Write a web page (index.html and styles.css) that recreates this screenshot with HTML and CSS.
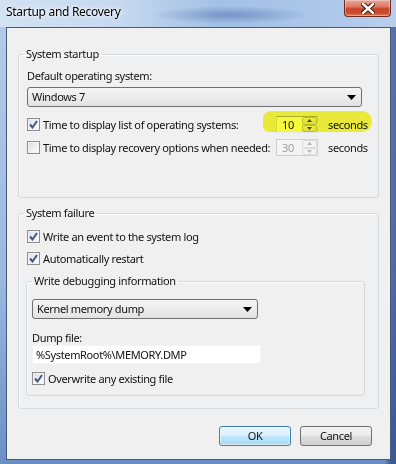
FILE: index.html
```html
<!DOCTYPE html>
<html lang="en">
<head>
    <meta charset="UTF-8">
    <title>Startup and Recovery</title>
    <link rel="stylesheet" href="styles.css">
</head>
<body>
    <div class="window">
        <div class="titlebar">
            <span class="title">Startup and Recovery</span>
            <div class="close-btn">
                <svg width="14" height="11" viewBox="0 0 14 11">
                    <path d="M2 1 L12 10 M12 1 L2 10" stroke="#3a1a14" stroke-width="4.4" stroke-linecap="square"/>
                    <path d="M2 1 L12 10 M12 1 L2 10" stroke="#ffffff" stroke-width="2.4" stroke-linecap="square"/>
                </svg>
            </div>
        </div>

        <div class="client">
            <fieldset class="group group-startup">
                <legend>System startup</legend>
                <div class="field-label">Default operating system:</div>
                <div class="select select-os">
                    <span>Windows 7</span>
                    <svg class="arrow" width="9" height="5" viewBox="0 0 9 5"><path d="M0 0 H9 L4.5 5 Z" fill="#000"/></svg>
                </div>

                <div class="row row-time">
                    <span class="highlight"></span>
                    <label class="check">
                        <span class="box checked">
                            <svg width="9" height="9" viewBox="0 0 9 9"><path d="M1 4.5 L3.5 7.5 L8 1" fill="none" stroke="#44578a" stroke-width="2"/></svg>
                        </span>
                        Time to display list of operating systems:
                    </label>
                    <div class="spin">
                        <span class="spin-value">10</span>
                        <div class="spin-btns">
                            <span class="spin-btn"><svg width="5" height="3" viewBox="0 0 5 3"><path d="M0 3 L2.5 0 L5 3 Z" fill="#4d4d4d"/></svg></span>
                            <span class="spin-btn"><svg width="5" height="3" viewBox="0 0 5 3"><path d="M0 0 L2.5 3 L5 0 Z" fill="#4d4d4d"/></svg></span>
                        </div>
                    </div>
                    <span class="unit">seconds</span>
                </div>

                <div class="row row-recovery">
                    <label class="check">
                        <span class="box"></span>
                        Time to display recovery options when needed:
                    </label>
                    <div class="spin disabled">
                        <span class="spin-value">30</span>
                        <div class="spin-btns">
                            <span class="spin-btn"><svg width="5" height="3" viewBox="0 0 5 3"><path d="M0 3 L2.5 0 L5 3 Z" fill="#b5b5b5"/></svg></span>
                            <span class="spin-btn"><svg width="5" height="3" viewBox="0 0 5 3"><path d="M0 0 L2.5 3 L5 0 Z" fill="#b5b5b5"/></svg></span>
                        </div>
                    </div>
                    <span class="unit">seconds</span>
                </div>
            </fieldset>

            <fieldset class="group group-failure">
                <legend>System failure</legend>
                <label class="check row-log">
                    <span class="box checked">
                        <svg width="9" height="9" viewBox="0 0 9 9"><path d="M1 4.5 L3.5 7.5 L8 1" fill="none" stroke="#44578a" stroke-width="2"/></svg>
                    </span>
                    Write an event to the system log
                </label>
                <label class="check row-restart">
                    <span class="box checked">
                        <svg width="9" height="9" viewBox="0 0 9 9"><path d="M1 4.5 L3.5 7.5 L8 1" fill="none" stroke="#44578a" stroke-width="2"/></svg>
                    </span>
                    Automatically restart
                </label>

                <fieldset class="group group-debug">
                    <legend>Write debugging information</legend>
                    <div class="select select-dump">
                        <span>Kernel memory dump</span>
                        <svg class="arrow" width="9" height="5" viewBox="0 0 9 5"><path d="M0 0 H9 L4.5 5 Z" fill="#000"/></svg>
                    </div>
                    <div class="field-label dump-label">Dump file:</div>
                    <div class="text-input">%SystemRoot%\MEMORY.DMP</div>
                    <label class="check row-overwrite">
                        <span class="box checked">
                            <svg width="9" height="9" viewBox="0 0 9 9"><path d="M1 4.5 L3.5 7.5 L8 1" fill="none" stroke="#44578a" stroke-width="2"/></svg>
                        </span>
                        Overwrite any existing file
                    </label>
                </fieldset>
            </fieldset>

            <div class="buttons">
                <div class="btn btn-default">OK</div>
                <div class="btn">Cancel</div>
            </div>
        </div>
    </div>
</body>
</html>
```

FILE: styles.css
```css
* {
    box-sizing: border-box;
    margin: 0;
    padding: 0;
}

body {
    width: 396px;
    height: 464px;
    overflow: hidden;
    font-family: 'Noto Sans', 'Open Sans', sans-serif;
    font-size: 11px;
    letter-spacing: -0.35px;
    color: #111;
    background: #6f93c6;
}

.window {
    height: 464px;
    display: flex;
    flex-direction: column;
    background:
        linear-gradient(90deg, rgba(255,255,255,0) 0%, rgba(255,255,255,0) 97%, rgba(20,50,110,0.55) 98.7%, rgba(20,50,110,0.6) 100%),
        linear-gradient(180deg, #c6d9ef 0%, #b3cbea 6%, #9ab8e0 60%, #6a8fc6 100%);
}

/* title bar */
.titlebar {
    height: 27px;
    display: flex;
    align-items: flex-start;
    padding: 0 5px 0 6px;
    background:
        radial-gradient(ellipse 80px 9px at 230px 15px, rgba(60,95,160,0.45), rgba(60,95,160,0)),
        linear-gradient(90deg, #d2e2f3 0%, #c6d9f0 30%, #a3c0e5 55%, #abc6e9 80%, #b9cfec 100%);
}

.title {
    font-size: 12px;
    letter-spacing: -0.3px;
    line-height: 16px;
    margin-top: 4px;
    color: #000;
    text-shadow: 0 0 6px #fff, 0 0 3px #fff;
}

.close-btn {
    margin-left: auto;
    width: 47px;
    height: 17px;
    display: flex;
    align-items: center;
    justify-content: center;
    border: 1px solid #6b2c22;
    border-top: none;
    border-radius: 0 0 4px 4px;
    background: linear-gradient(180deg, #e9a393 0%, #dc7e68 40%, #c8452c 55%, #c94a2e 80%, #dd7a52 100%);
    box-shadow: inset 0 0 0 1px rgba(255,255,255,0.35);
}

/* client area */
.client {
    margin: 0 5px 4px 6px;
    flex: 1;
    border: 1px solid #465a78;
    background: #f0f0f0;
    padding: 18px 11px 12px 11px;
    display: flex;
    flex-direction: column;
}

.group {
    border: 1px solid #d5dadf;
    border-radius: 3px;
    min-width: 0;
    box-shadow: inset 1px 1px 0 #fbfbfb;
}

.group legend {
    margin-left: -3px;
    padding: 0 2px;
    line-height: 16px;
}

.group-startup {
    padding: 6px 16px 41px 8px;
}

.field-label {
    line-height: 16px;
}

.select {
    height: 20px;
    border: 1px solid #707070;
    border-radius: 3px;
    background: linear-gradient(180deg, #f5f5f5 0%, #ececec 50%, #e2e2e2 100%);
    display: flex;
    align-items: center;
    padding: 0 5px 0 4px;
    line-height: 18px;
}

.select .arrow {
    margin-left: auto;
}

.select-os {
    margin-top: 3px;
}

.row {
    position: relative;
    display: grid;
    grid-template-columns: 239px 42px auto;
    column-gap: 10px;
    align-items: center;
    height: 17px;
}

.row-time {
    margin-top: 9px;
}

.row-recovery {
    margin-top: 6px;
}

.highlight {
    position: absolute;
    left: 236px;
    top: -5px;
    width: 109px;
    height: 21px;
    border-radius: 8px 10px 10px 6px;
    background: #f8f83c;
    mix-blend-mode: multiply;
    z-index: 2;
}

.check {
    display: flex;
    align-items: center;
    gap: 3px;
    height: 17px;
    white-space: nowrap;
}

.box {
    width: 13px;
    height: 13px;
    flex: none;
    border: 1px solid #8e8f8f;
    background: linear-gradient(135deg, #dcdcdc 0%, #f2f2f2 60%, #ffffff 100%);
    box-shadow: inset 0 0 0 1px #f4f4f4;
    display: flex;
    align-items: center;
    justify-content: center;
}

.spin {
    height: 17px;
    border: 1px solid #abadb3;
    border-color: #abadb3 #e2e3ea #e3e9ef #dbdfe6;
    background: #fff;
    display: flex;
    align-items: stretch;
}

.spin-value {
    flex: 1;
    padding-left: 5px;
    line-height: 15px;
}

.spin-btns {
    width: 15px;
    display: flex;
    flex-direction: column;
}

.spin-btn {
    flex: 1;
    display: flex;
    align-items: center;
    justify-content: center;
    border: 1px solid #c3c3c3;
    border-radius: 2px;
    background: linear-gradient(180deg, #f6f6f6, #e4e4e4);
}

.spin.disabled {
    border-color: #d0d0d0;
    background: #f4f4f4;
    color: #a0a0a0;
}

.spin.disabled .spin-btn {
    border-color: #dcdcdc;
    background: #f4f4f4;
}

.unit {
    white-space: nowrap;
}

.group-failure {
    margin-top: 7px;
    padding: 7px 7px 12px 7px;
}

.group-failure > legend {
    margin-left: -2px;
}

.group-failure > .check {
    margin-left: 1px;
}

.row-restart {
    margin-top: 5px;
}

.group-debug {
    margin-top: 6px;
    width: 339px;
    padding: 10px 5px 8px 5px;
}

.group-debug > legend {
    margin-left: 0;
}

.select-dump {
    width: 226px;
}

.dump-label {
    margin-top: 12px;
    line-height: 14px;
}

.text-input {
    width: 229px;
    height: 19px;
    background: #fff;
    border: 1px solid #f4f4f4;
    padding-left: 3px;
    line-height: 17px;
}

.row-overwrite {
    margin-top: 6px;
}

/* dialog buttons */
.buttons {
    margin-top: 17px;
    margin-right: 7px;
    display: flex;
    justify-content: flex-end;
    gap: 9px;
}

.btn {
    width: 72px;
    height: 20px;
    border: 1px solid #707070;
    border-radius: 3px;
    background: linear-gradient(180deg, #f2f2f2 0%, #ebebeb 48%, #dddddd 52%, #cfcfcf 100%);
    text-align: center;
    line-height: 18px;
}

.btn-default {
    border-color: #3c7fb1;
    background: linear-gradient(180deg, #eaf6fd 0%, #d9f0fc 48%, #bee6fd 52%, #a7d9f5 100%);
    box-shadow: inset 0 0 0 1px rgba(255,255,255,0.6);
}
```
